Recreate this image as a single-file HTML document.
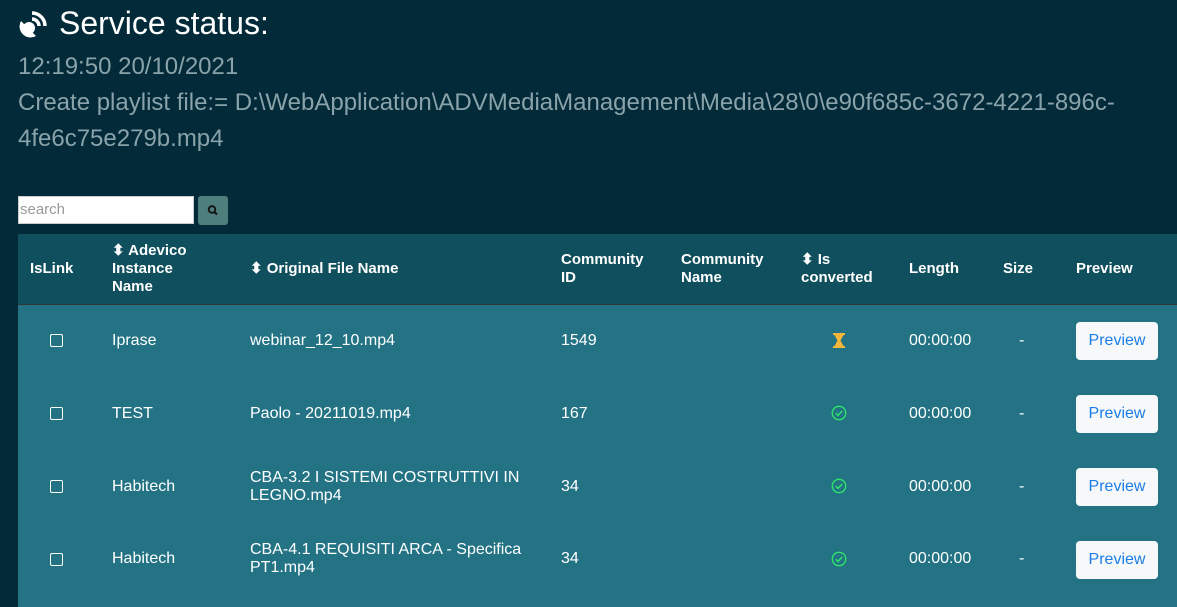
<!DOCTYPE html>
<html><head><style>
body{margin:0;width:1177px;height:607px;background:#022a38;font-family:"Liberation Sans",sans-serif;position:relative;overflow:hidden}
.a{position:absolute;white-space:nowrap}
.g{color:#8aa3aa;font-size:24px}
.h{color:#fff;font-weight:bold;font-size:15px;line-height:18px}
.c{color:#fff;font-size:16px;line-height:18px}
.cb{position:absolute;left:50px;width:13px;height:13px;border:1.5px solid #fff;border-radius:2px;box-sizing:border-box}
.btn{position:absolute;left:1076px;width:82px;height:38px;background:#f7f8fa;border-radius:4px;color:#1a7ee8;font-size:16px;line-height:38px;text-align:center}
.chk{position:absolute;left:831px;width:16px;height:16px}
</style></head><body>
<svg class="a" style="left:18px;top:8px" width="32" height="30" viewBox="0 0 32 30"><path d="M3 13 L18 28 A11 11 0 0 1 3 13Z" fill="#fff"/><circle cx="11" cy="20" r="6" fill="#fff"/><path d="M14 5 A13 13 0 0 1 27 18" stroke="#fff" stroke-width="3.5" fill="none"/><path d="M14 11 A7 7 0 0 1 21 18" stroke="#fff" stroke-width="3.5" fill="none"/></svg>
<div class="a" style="left:59px;top:5px;color:#fff;font-size:32px">Service status:</div>
<div class="a g" style="left:18px;top:53px">12:19:50 20/10/2021</div>
<div class="a g" style="left:18px;top:89px">Create playlist file:= D:\WebApplication\ADVMediaManagement\Media\28\0\e90f685c-3672-4221-896c-</div>
<div class="a g" style="left:18px;top:125px">4fe6c75e279b.mp4</div>
<div class="a" style="left:18px;top:196px;width:176px;height:28px;background:#fff;box-sizing:border-box;border:1px solid #ccc;color:#999;font-size:15px;line-height:26px;padding-left:1px">search</div>
<div class="a" style="left:198px;top:196px;width:30px;height:29px;background:#4f7f7c;border-radius:3px"><svg width="30" height="29"><circle cx="14" cy="13.5" r="3.3" stroke="#111" stroke-width="1.8" fill="none"/><path d="M16.5 16 L19 18.5" stroke="#111" stroke-width="2"/></svg></div>
<div class="a" style="left:18px;top:234px;width:1159px;height:70px;background:#10505e;border-bottom:1px solid #333"></div>
<div class="a" style="left:18px;top:305px;width:1159px;height:302px;background:#237385"></div>
<div class="a h" style="left:30px;top:260px">IsLink</div>
<div class="a h" style="left:112px;top:242px">⬍ Adevico<br>Instance<br>Name</div>
<div class="a h" style="left:250px;top:260px">⬍ Original File Name</div>
<div class="a h" style="left:561px;top:251px">Community<br>ID</div>
<div class="a h" style="left:681px;top:251px">Community<br>Name</div>
<div class="a h" style="left:801px;top:251px">⬍ Is<br>converted</div>
<div class="a h" style="left:909px;top:260px">Length</div>
<div class="a h" style="left:1003px;top:260px">Size</div>
<div class="a h" style="left:1076px;top:260px">Preview</div>

<div class="cb" style="top:334px"></div>
<div class="a c" style="left:112px;top:332px">Iprase</div>
<div class="a c" style="left:250px;top:332px">webinar_12_10.mp4</div>
<div class="a c" style="left:561px;top:332px">1549</div>
<svg class="a" style="left:832px;top:332px" width="14" height="17"><path d="M1 1H13V3H11.5L8.5 8.5L11.5 14H13V16H1V14H2.5L5.5 8.5L2.5 3H1Z" fill="#f5b73b"/></svg>
<div class="a c" style="left:909px;top:332px">00:00:00</div>
<div class="a c" style="left:1019px;top:332px">-</div>
<div class="btn" style="top:322px">Preview</div>

<div class="cb" style="top:407px"></div>
<div class="a c" style="left:112px;top:405px">TEST</div>
<div class="a c" style="left:250px;top:405px">Paolo - 20211019.mp4</div>
<div class="a c" style="left:561px;top:405px">167</div>
<svg class="chk" style="top:405px"><circle cx="8" cy="8" r="6.7" stroke="#2ee26a" stroke-width="1.4" fill="none"/><path d="M4.8 8.2L7 10.4L11.2 6" stroke="#2ee26a" stroke-width="1.5" fill="none"/></svg>
<div class="a c" style="left:909px;top:405px">00:00:00</div>
<div class="a c" style="left:1019px;top:405px">-</div>
<div class="btn" style="top:395px">Preview</div>

<div class="cb" style="top:480px"></div>
<div class="a c" style="left:112px;top:478px">Habitech</div>
<div class="a c" style="left:250px;top:469px">CBA-3.2 I SISTEMI COSTRUTTIVI IN<br>LEGNO.mp4</div>
<div class="a c" style="left:561px;top:478px">34</div>
<svg class="chk" style="top:478px"><circle cx="8" cy="8" r="6.7" stroke="#2ee26a" stroke-width="1.4" fill="none"/><path d="M4.8 8.2L7 10.4L11.2 6" stroke="#2ee26a" stroke-width="1.5" fill="none"/></svg>
<div class="a c" style="left:909px;top:478px">00:00:00</div>
<div class="a c" style="left:1019px;top:478px">-</div>
<div class="btn" style="top:468px">Preview</div>

<div class="cb" style="top:553px"></div>
<div class="a c" style="left:112px;top:550px">Habitech</div>
<div class="a c" style="left:250px;top:541px">CBA-4.1 REQUISITI ARCA - Specifica<br>PT1.mp4</div>
<div class="a c" style="left:561px;top:550px">34</div>
<svg class="chk" style="top:551px"><circle cx="8" cy="8" r="6.7" stroke="#2ee26a" stroke-width="1.4" fill="none"/><path d="M4.8 8.2L7 10.4L11.2 6" stroke="#2ee26a" stroke-width="1.5" fill="none"/></svg>
<div class="a c" style="left:909px;top:550px">00:00:00</div>
<div class="a c" style="left:1019px;top:550px">-</div>
<div class="btn" style="top:541px">Preview</div>
</body></html>
